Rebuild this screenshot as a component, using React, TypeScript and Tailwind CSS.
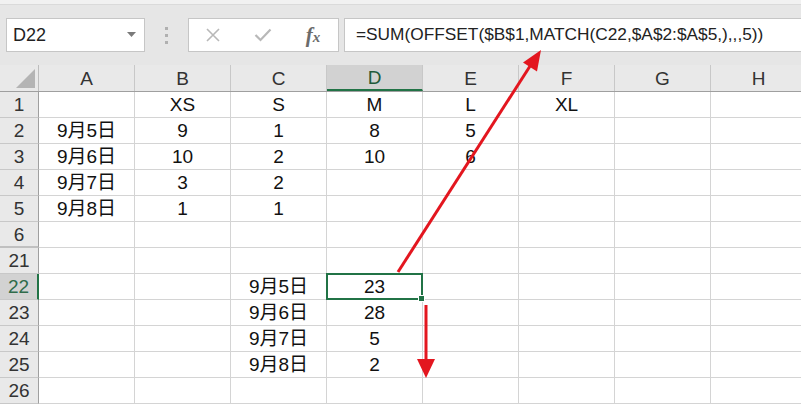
import React from "react";

const cols = ["A", "B", "C", "D", "E", "F", "G", "H"];

const rows: { n: string; cells: string[] }[] = [
    { n: "1", cells: ["", "XS", "S", "M", "L", "XL"] },
    { n: "2", cells: ["9月5日", "9", "1", "8", "5"] },
    { n: "3", cells: ["9月6日", "10", "2", "10", "6"] },
    { n: "4", cells: ["9月7日", "3", "2"] },
    { n: "5", cells: ["9月8日", "1", "1"] },
    { n: "6", cells: [] },
    { n: "21", cells: [] },
    { n: "22", cells: ["", "", "9月5日", "23"] },
    { n: "23", cells: ["", "", "9月6日", "28"] },
    { n: "24", cells: ["", "", "9月7日", "5"] },
    { n: "25", cells: ["", "", "9月8日", "2"] },
    { n: "26", cells: [] },
];

function Toolbar() {
    return (
        <div className="h-[65px] bg-[#e6e6e6] flex flex-col">
            <div className="h-[5px] bg-[#f1f1f1] border-b border-[#dadada]" />
            <div className="flex items-start pt-[13px] pl-[6px]">
                {/* name box */}
                <div className="w-[139px] h-[34px] bg-white border border-[#c6c6c6] flex items-center justify-between pl-[6px] pr-[8px]">
                    <span className="text-[18px] text-[#222] leading-none">D22</span>
                    <svg width="9" height="6" viewBox="0 0 9 6">
                        <path d="M0 0 L9 0 L4.5 5 Z" fill="#7a7a7a" />
                    </svg>
                </div>
                {/* grip dots */}
                <div className="w-[43px] h-[34px] flex flex-col items-center justify-center gap-[4px]">
                    <div className="w-[3px] h-[3px] bg-[#b0b0b0]" />
                    <div className="w-[3px] h-[3px] bg-[#b0b0b0]" />
                    <div className="w-[3px] h-[3px] bg-[#b0b0b0]" />
                </div>
                {/* cancel / enter / fx */}
                <div className="w-[151px] h-[34px] bg-white border border-[#c6c6c6] flex items-center">
                    <div className="w-[48px] flex justify-center">
                        <svg width="16" height="16" viewBox="0 0 16 16">
                            <path d="M2 2 L14 14 M14 2 L2 14" stroke="#b8b8b8" strokeWidth="1.6" fill="none" />
                        </svg>
                    </div>
                    <div className="w-[52px] flex justify-center">
                        <svg width="18" height="14" viewBox="0 0 18 14">
                            <path d="M1.5 7 L6.5 12 L16.5 1.5" stroke="#b8b8b8" strokeWidth="2.2" fill="none" />
                        </svg>
                    </div>
                    <div className="w-[48px] flex justify-center">
                        <span className="italic font-bold text-[21px] text-[#6b6b6b] leading-none font-['Liberation_Serif',serif]">
                            f<span className="text-[15px]">x</span>
                        </span>
                    </div>
                </div>
                {/* formula */}
                <div className="ml-[5px] flex-1 h-[34px] bg-white border border-[#c6c6c6] border-r-0 flex items-center pl-[11px]">
                    <span className="text-[17.3px] text-[#222] leading-none whitespace-nowrap">
                        =SUM(OFFSET($B$1,MATCH(C22,$A$2:$A$5,),,,5))
                    </span>
                </div>
            </div>
        </div>
    );
}

export default function App() {
    return (
        <div className="relative w-[801px] h-[407px] overflow-hidden bg-white font-['Liberation_Sans','Noto_Sans_CJK_SC',sans-serif]">
            <Toolbar />

            {/* column headers */}
            <div className="flex h-[27px] bg-[#e9e9e9] border-b border-[#9f9f9f]">
                <div className="w-[39px] shrink-0 border-r border-[#bdbdbd] flex items-end justify-end pr-[3px] pb-[3px]">
                    <svg width="19" height="19" viewBox="0 0 19 19">
                        <path d="M19 0 L19 19 L0 19 Z" fill="#b4b4b4" />
                    </svg>
                </div>
                {cols.map((c) => (
                    <div
                        key={c}
                        className={
                            c === "D"
                                ? "w-[96px] shrink-0 border-r border-[#c8c8c8] bg-[#d2d2d2] border-b-2 border-b-[#217346] flex items-center justify-center pt-[2px] text-[19px] text-[#215a3a]"
                                : "w-[96px] shrink-0 border-r border-[#c8c8c8] flex items-center justify-center pt-[2px] text-[19px] text-[#333]"
                        }
                    >
                        {c}
                    </div>
                ))}
            </div>

            {/* rows */}
            {rows.map((r) => (
                <div key={r.n} className="flex h-[26px]">
                    <div
                        className={
                            r.n === "22"
                                ? "w-[39px] shrink-0 bg-[#d2d2d2] border-r-2 border-[#217346] border-b border-b-[#c8c8c8] flex items-center justify-center pt-[2px] text-[19px] text-[#2f6b4a]"
                                : r.n === "6"
                                ? "w-[39px] shrink-0 bg-[#e9e9e9] border-r border-[#9f9f9f] border-b-2 border-b-[#c0c0c0] flex items-center justify-center pt-[2px] text-[19px] text-[#333]"
                                : "w-[39px] shrink-0 bg-[#e9e9e9] border-r border-[#9f9f9f] border-b border-b-[#c8c8c8] flex items-center justify-center pt-[2px] text-[19px] text-[#333]"
                        }
                    >
                        {r.n}
                    </div>
                    {cols.map((c, i) => {
                        const selected = r.n === "22" && c === "D";
                        return (
                            <div
                                key={c}
                                className="relative w-[96px] shrink-0 border-r border-b border-[#d4d4d4] flex items-center justify-center pt-[2px] text-[19px] text-[#111]"
                            >
                                {r.cells[i] ?? ""}
                                {selected && (
                                    <div className="absolute -left-px -top-px w-[97px] h-[27px] border-2 border-[#217346] z-10">
                                        <div className="absolute -right-[4px] -bottom-[4px] w-[7px] h-[7px] bg-[#217346] border border-white" />
                                    </div>
                                )}
                            </div>
                        );
                    })}
                </div>
            ))}

            {/* annotation arrows */}
            <svg className="absolute inset-0 pointer-events-none z-20" width="801" height="407" viewBox="0 0 801 407">
                <line x1="398" y1="272" x2="532" y2="63" stroke="#e3161f" strokeWidth="3" />
                <polygon points="541,50 537,71.5 523,62.5" fill="#e3161f" />
                <line x1="426" y1="305" x2="426" y2="362" stroke="#e3161f" strokeWidth="3" />
                <polygon points="417,359 435,359 426,378" fill="#e3161f" />
            </svg>
        </div>
    );
}
